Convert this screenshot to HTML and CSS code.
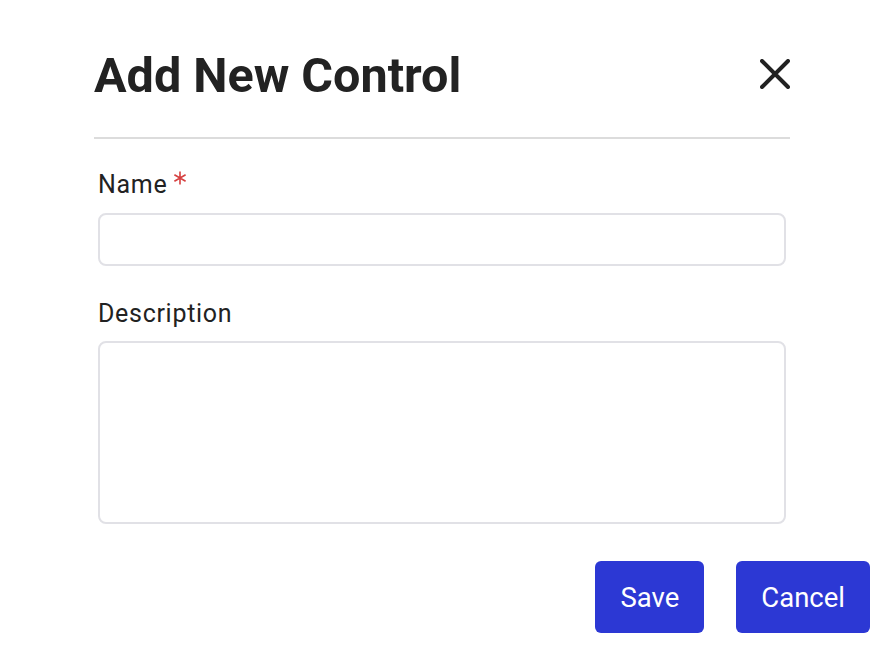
FILE: index.html
```html
<!DOCTYPE html>
<html>
<head>
<meta charset="utf-8">
<link rel="stylesheet" href="styles.css">
</head>
<body>
<div class="dialog">
  <div class="header">
    <h1 class="title">Add New Control</h1>
    <button class="close" aria-label="Close">
      <svg width="30" height="30" viewBox="0 0 30 30"><path d="M2 2L28 28M28 2L2 28" stroke="#222" stroke-width="4" stroke-linecap="round"/></svg>
    </button>
  </div>
  <div class="divider"></div>
  <form class="form">
    <label class="label label-name">Name<svg class="req" width="14" height="14" viewBox="0 0 14 14" aria-label="required"><path d="M7 0.5V13.5M1.4 3.75L12.6 10.25M12.6 3.75L1.4 10.25" stroke="#d64040" stroke-width="1.6"/></svg></label>
    <input class="input" type="text">
    <label class="label label-desc">Description</label>
    <textarea class="textarea"></textarea>
  </form>
  <div class="actions">
    <button class="btn">Save</button>
    <button class="btn">Cancel</button>
  </div>
</div>
</body>
</html>
```
FILE: styles.css
```css
html, body {
  margin: 0;
  padding: 0;
  background: #fff;
}
body {
  font-family: Roboto, "Liberation Sans", sans-serif;
  color: #222;
  width: 880px;
  height: 648px;
  overflow: hidden;
}
.dialog {
  padding: 48px 10px 0 94px;
  display: flex;
  flex-direction: column;
}
.header {
  width: 696px;
  height: 56px;
  display: flex;
  justify-content: space-between;
  align-items: center;
}
.title {
  margin: 0;
  font-size: 48.5px;
  font-weight: 700;
  line-height: 56px;
  color: #222;
}
.close {
  border: 0;
  background: none;
  padding: 0;
  width: 30px;
  height: 30px;
  margin-top: -4px;
  display: block;
}
.close svg { display: block; }
.divider {
  width: 696px;
  height: 2px;
  background: #dcdcdc;
  margin-top: 33px;
}
.form {
  display: flex;
  flex-direction: column;
  padding-left: 4px;
  width: 688px;
}
.label {
  display: flex;
  align-items: flex-start;
  height: 28px;
  font-size: 25px;
  letter-spacing: 0.7px;
  line-height: 28px;
  color: #222;
}
.label-name { margin-top: 32px; }
.label-desc { margin-top: 34px; }
.req {
  margin-left: 6px;
  margin-top: 0;
  flex: none;
}
.input, .textarea {
  box-sizing: border-box;
  width: 688px;
  border: 2px solid #e1e1e6;
  border-radius: 8px;
  font-family: inherit;
  font-size: 20px;
  outline: none;
  resize: none;
  margin: 0;
}
.input {
  height: 53px;
  margin-top: 14px;
}
.textarea {
  height: 183px;
  margin-top: 13px;
}
.actions {
  display: flex;
  justify-content: flex-end;
  gap: 32px;
  margin-top: 37px;
  width: 776px;
}
.btn {
  height: 72px;
  padding: 0 25px;
  border: 0;
  border-radius: 6px;
  background: #2c38d4;
  color: #fff;
  font-family: inherit;
  font-size: 27.5px;
  font-weight: 400;
}
```
